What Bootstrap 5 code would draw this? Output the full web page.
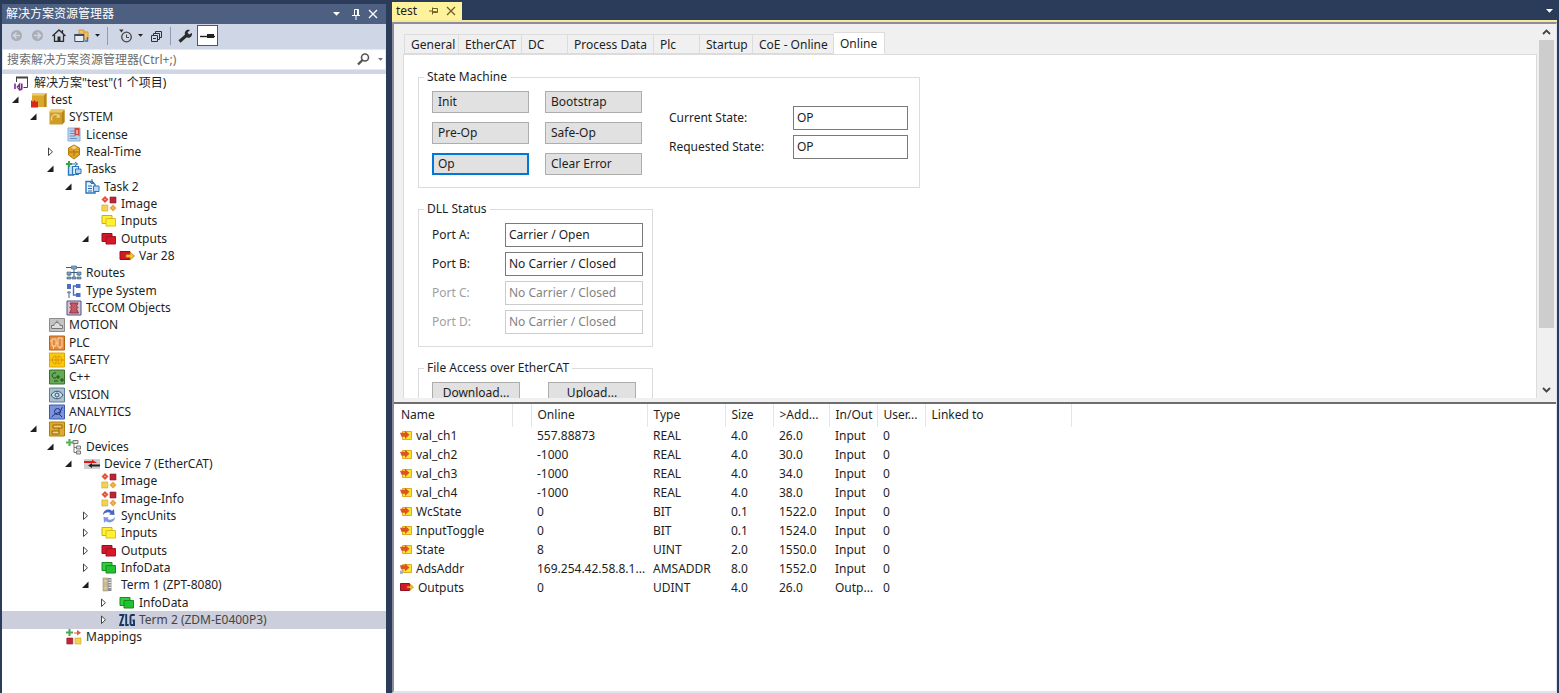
<!DOCTYPE html>
<html lang="zh-CN">
<head>
<meta charset="utf-8">
<meta name="viewport" content="width=device-width, initial-scale=1">
<title>test</title>
<link href="https://cdn.jsdelivr.net/npm/bootstrap@5.3.0/dist/css/bootstrap.min.css" rel="stylesheet">
<style>
  body { background: #2b3c5a; font-family: "Noto Sans", "Noto Sans CJK SC", sans-serif; font-size: 12px; line-height: 16px; color: #1e1e1e; }
  svg { display: block; flex: none; }
  button { color: inherit; }
  .sprite { position: absolute; width: 0; height: 0; }

  /* solution explorer */
  .explorer { width: 384px; margin-left: 2px; background: #cfd6e5; flex: none; }
  .explorer-title { height: 20px; background: #4d6082; color: #fff; padding: 0 8px 0 4px; }
  .explorer-tools { height: 25px; padding: 0 8px 2px; }
  .tool { border: 0; background: none; padding: 0; height: 21px; }
  .tool-drop { display: flex; align-items: center; gap: 6px; }
  .tool-on { border: 1px solid #4a5672; background: #fff; width: 21px; }
  .tool-sep { width: 1px; height: 18px; background: #8e9bb5; margin: 0 7px; }
  .search { height: 21px; background: #fff; border: 1px solid #e3e8f1; padding: 0 2px 0 4px; }
  .search input { border: 0; outline: 0; padding: 0; background: none; color: #1e1e1e; min-width: 0; }
  .search input::placeholder { color: #6d6d6d; opacity: 1; }
  .tree { background: #fff; margin: 4px 0 0; padding: 0 0 47px; list-style: none; display: grid; grid-auto-rows: 1fr; min-height: 0; }
  .tree li { display: flex; align-items: center; gap: 4px; white-space: nowrap; min-height: 0; }
  .tree .twist { width: 17px; height: 16px; border: 0; padding: 0; background: none; flex: none; }
  .lv0 { padding-left: 12px; } .lv1 { padding-left: 8px; } .lv2 { padding-left: 26px; }
  .lv3 { padding-left: 43px; } .lv4 { padding-left: 61px; } .lv5 { padding-left: 78px; } .lv6 { padding-left: 96px; }
  .tree .picked { background: #cccedb; color: #444; }

  /* document area */
  .doc { margin: 2px 2px 0 6px; min-width: 0; }
  .doc-strip { height: 18px; border: 0; }
  .doc-tab { background: #fff29d; width: 70px; padding: 0 6px 0 4px; }
  .doc-body { border: solid #8e8b9a; border-width: 2px 1px 2px 2px; border-bottom-color: #dfe5f0; border-right-color: #dfe5f0; min-height: 0; background: #f0f0f0; }
  .doc-line { height: 2px; background: #f5e99c; }
  .pane-top { flex: 56 1 0; min-height: 0; padding-left: 9px; }
  .pane-split { height: 6px; border-bottom: 2px solid #6d6d6d; flex: none; }
  .pane-grid { flex: 43 1 0; min-height: 0; background: #fff; overflow: hidden; }
  .page-tabs { padding: 8px 0 0 1px; border: 0; flex-wrap: nowrap; }
  .page-tabs .nav-link { border: 1px solid #dcdcdc; border-left-width: 0; border-radius: 0; background: #f0f0f0; color: #1e1e1e; height: 20px; padding: 1px 0 0 6px; margin: 2px 0 0; white-space: nowrap; text-align: left; }
  .page-tabs li:first-child .nav-link { border-left-width: 1px; }
  .page-tabs .nav-link.active { background: #fff; color: #1e1e1e; height: 22px; margin: 0; border-color: #dcdcdc; border-bottom-color: #fff; }
  .w46 { width: 46px; } .w51 { width: 51px; } .w53 { width: 53px; } .w55 { width: 55px; } .w63 { width: 63px; } .w81 { width: 81px; } .w86 { width: 86px; }
  .page-sheet { background: #fff; border: 1px solid #dcdcdc; border-bottom: 0; padding: 13px 14px 0; overflow: hidden; min-height: 0; margin-right: 2px; }
  .box { border: 1px solid #dcdcdc; padding: 5px 11px 12px 13px; margin: 0 0 12px; }
  .box legend { float: none; width: auto; font-size: 12px; line-height: 18px; margin: 0 0 0 -8px; padding: 0 3px; }
  .box-wide { width: 502px; } .box-slim { width: 235px; }
  .push { border: 1px solid #adadad; background: #e1e1e1; border-radius: 0; height: 22px; padding: 0 5px; font-size: 12px; line-height: 18px; text-align: left; color: #1e1e1e; }
  .push-focus { border: 2px solid #0078d7; padding: 0 4px; line-height: 16px; }
  .push-grid { display: grid; grid-template-columns: 97px 97px; gap: 9px 16px; }
  .file-grid { display: grid; grid-template-columns: 88px 88px; gap: 28px; }
  .field { border: 1px solid #7a7a7a; border-radius: 0; background: #fff; height: 24px; padding: 0 3px 2px; font-size: 12px; color: #1e1e1e; min-width: 0; }
  .field:disabled { border-color: #ccc; color: #838383; background: #fff; }
  .state-grid { display: grid; grid-template-columns: 124px 115px; gap: 5px 0; align-items: center; margin-top: 15px; }
  .port-grid { display: grid; grid-template-columns: 73px 138px; gap: 5px 0; align-items: center; }
  .dim { color: #a0a0a0; }
  .scroll { width: 15px; background: #f0f0f0; margin-right: 2px; }
  .scroll button { border: 0; background: none; height: 16px; padding: 0; }
  .thumb { background: #cdcdcd; flex: 0 0 288px; }

  .vars { table-layout: fixed; width: 677px; border-collapse: collapse; margin: 0; }
  .vars th { font-weight: 400; height: 23px; border-right: 1px solid #e5e5e5; padding: 0 0 0 6px; }
  .vars th:first-child { padding-left: 7px; }
  .vars td { height: 19px; padding: 0 0 0 6px; white-space: nowrap; }
  .vars td svg { display: inline-block; vertical-align: -1px; margin-right: 4px; }
</style>
</head>
<body class="vh-100 overflow-hidden">

<svg class="sprite" aria-hidden="true">
  <symbol id="open" viewBox="0 0 17 16"><path d="M8.500 4.500v6.500H2z" fill="#1e1e1e"/></symbol>
  <symbol id="shut" viewBox="0 0 17 16"><path d="M3.500 4v7.500l4-3.700z" fill="#fff" stroke="#444"/></symbol>
  <symbol id="sln" viewBox="0 0 16 16"><path d="M2.500 7V2.500h11v10H9.500" fill="#fff" stroke="#424242"/><path d="M2 2.500h12" stroke="#424242" stroke-width="2"/><path d="M1 8.500v5.500M3 12.500l2.500-3v5l-2.500-3M7.800 8.500v6M5.500 14.500l2.300 0" fill="none" stroke="#7b2d90" stroke-width="1.600"/></symbol>
  <symbol id="proj" viewBox="0 0 16 16"><path d="M1 1h14.500v14H1z" fill="#d9a72c"/><path d="M1 1h14.500L13 3.500H1z" fill="#f0cd6c"/><path d="M13 3.500L15.500 1v14H13z" fill="#b98718"/><path d="M0 8l2 2 1.500-2 1.500 2 2-1v6.500H0z" fill="#d8281e"/></symbol>
  <symbol id="sys" viewBox="0 0 16 16"><path d="M2 .5h13.500V13L13 15.500H.5V3z" fill="#cf9c25"/><path d="M2 .5h13.500L13 3.500H.5z" fill="#edc766"/><path d="M13 3.500L15.500 1v12L13 15.500z" fill="#b58419"/><path d="M3 11.500a4 4 0 0 1 7-4M10 5.500v2.500H7.500" fill="none" stroke="#f1d68a" stroke-width="1.300"/></symbol>
  <symbol id="lic" viewBox="0 0 16 16"><path d="M2 1h12v13H2z" fill="#b6d0ec" stroke="#8fb0d5"/><path d="M4 4h5M4 6.500h5M4 9h5M4 11.500h7" stroke="#6e93c4"/><path d="M8.500 1h5v8L11 8 8.500 9z" fill="#d34a3a"/><path d="M11 3v4" stroke="#fff" stroke-width="1"/></symbol>
  <symbol id="rt" viewBox="0 0 16 16"><path d="M8 1l5.500 3v7L8 15l-5.500-4V4z" fill="#dfa323" stroke="#b27c12"/><path d="M3 8h10M8 4v8" stroke="#a87414"/><path d="M5 3.500l3-2 3 2-3 2z" fill="#f6d27a"/></symbol>
  <symbol id="tasks" viewBox="0 0 16 16"><path d="M2.500 4v10h5V6" fill="#cfe3f6" stroke="#2a78bd" stroke-width="1.400"/><path d="M6.500 5.500h6v8h-6z" fill="#dcebf8" stroke="#2a78bd" stroke-width="1.200"/><path d="M9.500 8h5.500v4.500H9.500z" fill="#b9d7f3" stroke="#2a78bd"/><path d="M6 3h5.500M9 1l2.500 2L9 5" fill="none" stroke="#2a78bd"/><path d="M3 0v6M0 3h6" stroke="#35a247" stroke-width="2"/></symbol>
  <symbol id="task" viewBox="0 0 16 16"><path d="M2 2.500h6l3 3V14H2z" fill="#e8f2fb" stroke="#2a78bd" stroke-width="1.400"/><path d="M9.500 7h5.500v5.500H9.500z" fill="#b9d7f3" stroke="#2a78bd"/><path d="M4 7h4M4 9.500h4M4 12h4M8 0v4M6 3l2 2 2-2" fill="none" stroke="#2a6bae"/></symbol>
  <symbol id="img" viewBox="0 0 16 16"><path d="M4 0l3.500 3.500L4 7 .5 3.500z" fill="#e2523f"/><path d="M9 1h6v6H9z" fill="#b9263a" stroke="#8f1a2a" stroke-width=".6"/><path d="M.8 9h6v6h-6z" fill="#f2d254" stroke="#c9a32e" stroke-width=".6"/><path d="M12 8.500l3.500 3.500-3.500 3.500L8.500 12z" fill="#e7a53a"/><path d="M3.500 3.500h1M11.500 12h1" stroke="#fbe7c8"/></symbol>
  <symbol id="yel" viewBox="0 0 16 16"><path d="M1 2.500h10v8H1z" fill="#fff12e" stroke="#c9ae18"/><path d="M5 5.500h9.500V13H5z" fill="#fff12e" stroke="#d8bf20"/></symbol>
  <symbol id="red" viewBox="0 0 16 16"><path d="M1 2.500h10v8H1z" fill="#d81628" stroke="#8c1420"/><path d="M5 5.500h9.500V13H5z" fill="#d81628" stroke="#a01522"/></symbol>
  <symbol id="grn" viewBox="0 0 16 16"><path d="M1 2.500h10v8H1z" fill="#2fd03c" stroke="#178a22"/><path d="M5 5.500h9.500V13H5z" fill="#22c12f" stroke="#178a22"/></symbol>
  <symbol id="var" viewBox="0 0 16 16"><path d="M1 3.500h10v8H1z" fill="#d81628" stroke="#8c1420"/><path d="M7 6.500h4V4l4.500 4-4.500 4V9.500H7z" fill="#f5c22d" stroke="#a9701a" stroke-width=".7"/></symbol>
  <symbol id="routes" viewBox="0 0 16 16"><path d="M0 2.500h5M11 2.500h5M8 4v8M3 11V7.500h10V11" fill="none" stroke="#3b5a78"/><path d="M5.500 1h5v3h-5zM1 7h4v3H1zM11 7h4v3h-4zM1 12h4v2H1zM6 12h4v2H6zM11 12h4v2h-4z" fill="#7fa3bd" stroke="#3b5a78" stroke-width=".6"/></symbol>
  <symbol id="type" viewBox="0 0 16 16"><path d="M1 1h4v5H1zM10 1h4.500v4H10zM10 10h4.500v4H10z" fill="#4a6fc0"/><path d="M10 3H7.500v9H10" fill="none" stroke="#4a6fc0" stroke-width="1.400"/><path d="M3 8v3M1 9.500h4M3 11v4" stroke="#7c8aa5" stroke-width="1.400"/></symbol>
  <symbol id="tccom" viewBox="0 0 16 16"><path d="M1 1h14v14H1z" fill="#d9c4cc" stroke="#49508a"/><path d="M4 3h8l-1.500 3 1.500 1.500-1.500 1.500 2 4h-9l2-4L4 7.500 5.500 6z" fill="#c75565" stroke="#8d3445"/></symbol>
  <symbol id="motion" viewBox="0 0 16 16"><path d="M.5 1.500h15v13H.5z" fill="#c3c3c3" stroke="#8c8c8c"/><path d="M2.500 11.500v-3h2.500c0-4 6-4 6 0h2.500v3zM8 3.500v2" fill="#dedede" stroke="#777"/></symbol>
  <symbol id="plc" viewBox="0 0 16 16"><path d="M.5 1h15v14H.5z" fill="#e5893a" stroke="#b8611c"/><path d="M3 4h4v7H3zM9 3h4v9H9zM1 6h2M7 8h2M4.500 11v3M11 12v2" fill="none" stroke="#fbd9b5"/></symbol>
  <symbol id="safety" viewBox="0 0 16 16"><path d="M.5 1h15v14H.5z" fill="#fcc80b" stroke="#dba60c"/><path d="M7 4C2 4 2 12 7 12V4zM9 4c5 0 5 8 0 8V4zM1 8h14" fill="none" stroke="#d9950a"/></symbol>
  <symbol id="cpp" viewBox="0 0 16 16"><path d="M.5 1h15v14H.5z" fill="#67a955" stroke="#39712d"/><path d="M7 4C2 3 2 10 7 9M7 8h4M9 6v4M11 11h4M13 9v4M5 12h4" fill="none" stroke="#1f4c1a"/></symbol>
  <symbol id="vision" viewBox="0 0 16 16"><path d="M.5 1h15v14H.5z" fill="#a8c0cf" stroke="#5e7f95"/><path d="M2 8c3-5 9-5 12 0-3 5-9 5-12 0z" fill="#c9dbe5" stroke="#34546a"/><circle cx="8" cy="8" r="2" fill="none" stroke="#34546a"/></symbol>
  <symbol id="ana" viewBox="0 0 16 16"><path d="M.5 1h15v14H.5z" fill="#7b93dd" stroke="#4159a8"/><path d="M2.500 13l3.500-3 5-2 2.500-5M10 10l3 3" fill="none" stroke="#1f3276"/><circle cx="8.500" cy="7.500" r="3" fill="none" stroke="#1f3276"/></symbol>
  <symbol id="io" viewBox="0 0 16 16"><path d="M.5 1h15v14H.5z" fill="#e0a92f" stroke="#ad7d17"/><path d="M4 4h9v3H4zM10 7v2.500M3 10h7v3H3z" fill="#f3d079" stroke="#8f6410"/></symbol>
  <symbol id="devs" viewBox="0 0 16 16"><path d="M3.500 0v7M0 3.500h7" stroke="#4db35c" stroke-width="2.200"/><path d="M7 1.500h5v3H7zM10.500 7h4v3h-4zM10.500 12h4v3h-4z" fill="#ddd" stroke="#777"/><path d="M8 5v8.500h2.500M8 8.500h2.500" fill="none" stroke="#777"/></symbol>
  <symbol id="dev" viewBox="0 0 16 16"><path d="M0 3h16v10H0z" fill="#cfcfcf"/><path d="M0 5h8V3.500L13 7H0z" fill="#e01b1b"/><path d="M16 8.500H8V7L4 9.500 8 12v-1.500h8z" fill="#222"/></symbol>
  <symbol id="sync" viewBox="0 0 16 16"><path d="M2 7c0-5 6-7 9-4l2-2 .5 6L8 6.500 9.500 5C7 3.500 4 4.500 2 7z" fill="#4a66c4"/><path d="M14 9c0 5-6 7-9 4l-2 2-.5-6 5.500.5L6.500 11c2.500 1.500 5.500.5 7.500-2z" fill="#7f97dc"/></symbol>
  <symbol id="term" viewBox="0 0 16 16"><path d="M2 1h5v13H2z" fill="#c9b98b" stroke="#a3966f" stroke-width=".6"/><path d="M7 1h3.500v13H7z" fill="#8d8d97"/><path d="M7.500 3h3M7.500 5.500h3M7.500 8h3M7.500 10.500h3M3.500 4h2M3.500 11h2" stroke="#ece9e0"/></symbol>
  <symbol id="zlg" viewBox="0 0 16 16"><path d="M.3 3H4.500L1.200 13H5.200M7.200 2v11h2.500M15.800 3h-3.500l-.8 1v8l.8 1H15V8.500h-1.500" fill="none" stroke="#123a63" stroke-width="1.900"/></symbol>
  <symbol id="map" viewBox="0 0 16 16"><path d="M3.500 0v7M0 3.500h7" stroke="#4aa650" stroke-width="2"/><path d="M8 3.500h3V1l4 2.700-4 2.700V4.500H8z" fill="#dd5a45"/><path d="M.8 9h6v6h-6z" fill="#c42436" stroke="#8f1a2a" stroke-width=".6"/><path d="M9 9h6v6H9z" fill="#f4d44c" stroke="#c9a32e" stroke-width=".6"/></symbol>
  <symbol id="in" viewBox="0 0 12 11"><path d="M2.500 1.500h9v8h-9z" fill="#ffe52e" stroke="#e0a824"/><path d="M0 2.800h5V.8L9.500 4.800 5 9V6.800H1.500z" fill="#df5228"/></symbol>
  <symbol id="ads" viewBox="0 0 12 11"><path d="M2.500 1.500h9v8h-9z" fill="#ffe52e" stroke="#e0a824"/><path d="M0 2.300h5V.5L9.500 4.500 5 8.500V6.300H1z" fill="#df5228"/><path d="M0 7.500h4L2.500 11H0z" fill="#a9b3bd"/></symbol>
  <symbol id="out" viewBox="0 0 14 11"><path d="M.5 1.500h9v7h-9z" fill="#d81628" stroke="#8c1420"/><path d="M7 4.200h3V2l3.500 3L10 8.500V6H7z" fill="#f5c22d" stroke="#a9701a" stroke-width=".6"/></symbol>
  <symbol id="caret" viewBox="0 0 7 4"><path d="M0 0h7L3.500 3.800z" fill="currentColor"/></symbol>
  <symbol id="cross" viewBox="0 0 10 10"><path d="M1 1l8 8M9 1L1 9" stroke="currentColor" stroke-width="1.300"/></symbol>
</svg>

<div class="d-flex h-100">
  <aside class="explorer d-flex flex-column mt-1">
    <header class="explorer-title d-flex align-items-center">
      <span class="me-auto">解决方案资源管理器</span>
      <button class="tool me-2 text-white" aria-label="窗口位置"><svg width="7" height="4"><use href="#caret"/></svg></button>
      <button class="tool me-2 ms-1 text-white" aria-label="自动隐藏"><svg width="8" height="11" viewBox="0 0 8 11" fill="none" stroke="currentColor"><path d="M2.500 6V.5h4V6M0 6.500h8M4 7v4M5.500 1v5"/></svg></button>
      <button class="tool text-white" aria-label="关闭"><svg width="10" height="10"><use href="#cross"/></svg></button>
    </header>
    <div class="explorer-tools d-flex align-items-center">
      <button class="tool me-2" aria-label="后退" disabled><svg width="13" height="13" viewBox="0 0 13 13"><circle cx="6.500" cy="6.500" r="5.500" fill="#a9adb6"/><path d="M10 6.500H4M6.500 3.500l-3 3 3 3" stroke="#cfd6e5" stroke-width="1.600" fill="none"/></svg></button>
      <button class="tool me-2" aria-label="前进" disabled><svg width="13" height="13" viewBox="0 0 13 13"><circle cx="6.500" cy="6.500" r="5.500" fill="#a9adb6"/><path d="M3 6.500h6M6.500 3.500l3 3-3 3" stroke="#cfd6e5" stroke-width="1.600" fill="none"/></svg></button>
      <button class="tool me-2" aria-label="主页"><svg width="14" height="13" viewBox="0 0 14 13"><path d="M.5 7L7 1l6.500 6M2.500 6v6.500h9V6M10.500 1v3" fill="none" stroke="#2b2b2b" stroke-width="1.300"/><path d="M5.500 7.500h3v5h-3z" fill="#2b2b2b"/></svg></button>
      <button class="tool tool-drop" aria-label="切换视图"><svg width="15" height="14" viewBox="0 0 15 14"><path d="M5 1h5v4H5zM10 3h4v7h-4" fill="#f3c165" stroke="#d99a2b"/><path d="M.8 5.500h9v7h-9z" fill="#e8ecf4" stroke="#3a4a66"/><path d="M.5 6h9.600" stroke="#3a4a66" stroke-width="2"/><path d="M13.500 8v4h-3" stroke="#2d79c7" fill="none" stroke-width="1.400"/></svg><svg width="5" height="3"><use href="#caret"/></svg></button>
      <span class="tool-sep"></span>
      <button class="tool tool-drop ms-1" aria-label="筛选"><svg width="13" height="14" viewBox="0 0 13 14"><path d="M0 .5h4.500L2.500 3.500z" fill="#333"/><circle cx="7.500" cy="8" r="4.800" fill="none" stroke="#444" stroke-width="1.300"/><path d="M7.500 5.500V8.500h2.500" fill="none" stroke="#444"/></svg><svg width="5" height="3"><use href="#caret"/></svg></button>
      <button class="tool ms-2" aria-label="全部折叠"><svg width="12" height="12" viewBox="0 0 12 12" fill="none" stroke="#333"><path d="M.5 5.500h6v6h-6zM2.500 5V3.500h6v6H7M4.500 3V1.500h6v6H9M2 8.500h3"/></svg></button>
      <span class="tool-sep"></span>
      <button class="tool me-1" aria-label="属性"><svg width="15" height="14" viewBox="0 0 15 14"><path d="M1.500 12.500L9 6" stroke="#2b2b2b" stroke-width="3"/><path d="M7 6c-1-4 2-6 5-5L9.500 3.500l1.500 2 3-1.500c.5 4-3 6-6 4z" fill="#2b2b2b"/></svg></button>
      <button class="tool tool-on" aria-label="预览选定项" aria-pressed="true"><svg class="mx-auto" width="15" height="6" viewBox="0 0 15 6"><path d="M0 3.500h15" stroke="#222" stroke-width="1.400"/><path d="M7 1h7v4H7z" fill="#222"/></svg></button>
    </div>
    <div class="search d-flex align-items-center gap-1">
      <input class="flex-grow-1" type="text" aria-label="搜索" placeholder="搜索解决方案资源管理器(Ctrl+;)">
      <svg width="13" height="13" viewBox="0 0 13 13" fill="none" stroke="#555"><circle cx="8" cy="4.500" r="3.500" stroke-width="1.600"/><path d="M5.500 7L1 11.500" stroke-width="2.400"/></svg>
      <svg class="text-secondary ms-1" width="5" height="3"><use href="#caret"/></svg>
    </div>
    <ul class="tree flex-grow-1">
      <li class="lv0"><svg width="16" height="16"><use href="#sln"/></svg>解决方案"test"(1 个项目)</li>
      <li class="lv1"><button class="twist" aria-label="折叠"><svg width="17" height="16"><use href="#open"/></svg></button><svg width="16" height="16"><use href="#proj"/></svg>test</li>
      <li class="lv2"><button class="twist" aria-label="折叠"><svg width="17" height="16"><use href="#open"/></svg></button><svg width="16" height="16"><use href="#sys"/></svg>SYSTEM</li>
      <li class="lv3"><span class="twist"></span><svg width="16" height="16"><use href="#lic"/></svg>License</li>
      <li class="lv3"><button class="twist" aria-label="展开"><svg width="17" height="16"><use href="#shut"/></svg></button><svg width="16" height="16"><use href="#rt"/></svg>Real-Time</li>
      <li class="lv3"><button class="twist" aria-label="折叠"><svg width="17" height="16"><use href="#open"/></svg></button><svg width="16" height="16"><use href="#tasks"/></svg>Tasks</li>
      <li class="lv4"><button class="twist" aria-label="折叠"><svg width="17" height="16"><use href="#open"/></svg></button><svg width="16" height="16"><use href="#task"/></svg>Task 2</li>
      <li class="lv5"><span class="twist"></span><svg width="16" height="16"><use href="#img"/></svg>Image</li>
      <li class="lv5"><span class="twist"></span><svg width="16" height="16"><use href="#yel"/></svg>Inputs</li>
      <li class="lv5"><button class="twist" aria-label="折叠"><svg width="17" height="16"><use href="#open"/></svg></button><svg width="16" height="16"><use href="#red"/></svg>Outputs</li>
      <li class="lv6"><span class="twist"></span><svg width="16" height="16"><use href="#var"/></svg>Var 28</li>
      <li class="lv3"><span class="twist"></span><svg width="16" height="16"><use href="#routes"/></svg>Routes</li>
      <li class="lv3"><span class="twist"></span><svg width="16" height="16"><use href="#type"/></svg>Type System</li>
      <li class="lv3"><span class="twist"></span><svg width="16" height="16"><use href="#tccom"/></svg>TcCOM Objects</li>
      <li class="lv2"><span class="twist"></span><svg width="16" height="16"><use href="#motion"/></svg>MOTION</li>
      <li class="lv2"><span class="twist"></span><svg width="16" height="16"><use href="#plc"/></svg>PLC</li>
      <li class="lv2"><span class="twist"></span><svg width="16" height="16"><use href="#safety"/></svg>SAFETY</li>
      <li class="lv2"><span class="twist"></span><svg width="16" height="16"><use href="#cpp"/></svg>C++</li>
      <li class="lv2"><span class="twist"></span><svg width="16" height="16"><use href="#vision"/></svg>VISION</li>
      <li class="lv2"><span class="twist"></span><svg width="16" height="16"><use href="#ana"/></svg>ANALYTICS</li>
      <li class="lv2"><button class="twist" aria-label="折叠"><svg width="17" height="16"><use href="#open"/></svg></button><svg width="16" height="16"><use href="#io"/></svg>I/O</li>
      <li class="lv3"><button class="twist" aria-label="折叠"><svg width="17" height="16"><use href="#open"/></svg></button><svg width="16" height="16"><use href="#devs"/></svg>Devices</li>
      <li class="lv4"><button class="twist" aria-label="折叠"><svg width="17" height="16"><use href="#open"/></svg></button><svg width="16" height="16"><use href="#dev"/></svg>Device 7 (EtherCAT)</li>
      <li class="lv5"><span class="twist"></span><svg width="16" height="16"><use href="#img"/></svg>Image</li>
      <li class="lv5"><span class="twist"></span><svg width="16" height="16"><use href="#img"/></svg>Image-Info</li>
      <li class="lv5"><button class="twist" aria-label="展开"><svg width="17" height="16"><use href="#shut"/></svg></button><svg width="16" height="16"><use href="#sync"/></svg>SyncUnits</li>
      <li class="lv5"><button class="twist" aria-label="展开"><svg width="17" height="16"><use href="#shut"/></svg></button><svg width="16" height="16"><use href="#yel"/></svg>Inputs</li>
      <li class="lv5"><button class="twist" aria-label="展开"><svg width="17" height="16"><use href="#shut"/></svg></button><svg width="16" height="16"><use href="#red"/></svg>Outputs</li>
      <li class="lv5"><button class="twist" aria-label="展开"><svg width="17" height="16"><use href="#shut"/></svg></button><svg width="16" height="16"><use href="#grn"/></svg>InfoData</li>
      <li class="lv5"><button class="twist" aria-label="折叠"><svg width="17" height="16"><use href="#open"/></svg></button><svg width="16" height="16"><use href="#term"/></svg>Term 1 (ZPT-8080)</li>
      <li class="lv6"><button class="twist" aria-label="展开"><svg width="17" height="16"><use href="#shut"/></svg></button><svg width="16" height="16"><use href="#grn"/></svg>InfoData</li>
      <li class="lv6 picked"><button class="twist" aria-label="展开"><svg width="17" height="16"><use href="#shut"/></svg></button><svg width="16" height="16"><use href="#zlg"/></svg>Term 2 (ZDM-E0400P3)</li>
      <li class="lv3"><span class="twist"></span><svg width="16" height="16"><use href="#map"/></svg>Mappings</li>
    </ul>
  </aside>

  <main class="doc d-flex flex-column flex-grow-1">
    <div class="doc-strip d-flex align-items-center justify-content-between pe-1">
      <div class="doc-tab d-flex align-items-center h-100"><span class="me-auto">test</span>
        <button class="tool me-2" aria-label="固定"><svg width="9" height="8" viewBox="0 0 9 8" fill="none" stroke="#6d6125"><path d="M0 4h3M3.500 0.500v7M3.500 1.500h5v4h-5M4 4.700h4.500"/></svg></button>
        <button class="tool" aria-label="关闭"><svg width="10" height="10" color="#6d6125"><use href="#cross"/></svg></button>
      </div>
      <button class="tool text-white" aria-label="文档列表"><svg width="7" height="4"><use href="#caret"/></svg></button>
    </div>
    <div class="doc-line"></div>
    <div class="doc-body d-flex flex-column flex-grow-1">
      <div class="pane-top d-flex">
        <div class="d-flex flex-column flex-grow-1">
          <ul class="nav nav-tabs page-tabs">
            <li><button class="nav-link w55">General</button></li>
            <li><button class="nav-link w63">EtherCAT</button></li>
            <li><button class="nav-link w46">DC</button></li>
            <li><button class="nav-link w86">Process Data</button></li>
            <li><button class="nav-link w46">Plc</button></li>
            <li><button class="nav-link w53">Startup</button></li>
            <li><button class="nav-link w81">CoE - Online</button></li>
            <li><button class="nav-link w51 active">Online</button></li>
          </ul>
          <div class="page-sheet flex-grow-1">
            <fieldset class="box box-wide">
              <legend>State Machine</legend>
              <div class="d-flex align-items-start justify-content-between">
                <div class="push-grid">
                  <button class="push">Init</button><button class="push">Bootstrap</button>
                  <button class="push">Pre-Op</button><button class="push">Safe-Op</button>
                  <button class="push push-focus">Op</button><button class="push">Clear Error</button>
                </div>
                <div class="state-grid">
                  <label for="cur">Current State:</label><input class="field" id="cur" value="OP" readonly>
                  <label for="req">Requested State:</label><input class="field" id="req" value="OP" readonly>
                </div>
              </div>
            </fieldset>
            <fieldset class="box box-slim">
              <legend>DLL Status</legend>
              <div class="port-grid">
                <label for="pa">Port A:</label><input class="field" id="pa" value="Carrier / Open" readonly>
                <label for="pb">Port B:</label><input class="field" id="pb" value="No Carrier / Closed" readonly>
                <label class="dim" for="pc">Port C:</label><input class="field" id="pc" value="No Carrier / Closed" disabled>
                <label class="dim" for="pd">Port D:</label><input class="field" id="pd" value="No Carrier / Closed" disabled>
              </div>
            </fieldset>
            <fieldset class="box box-slim">
              <legend>File Access over EtherCAT</legend>
              <div class="file-grid"><button class="push text-center">Download...</button><button class="push text-center">Upload...</button></div>
            </fieldset>
          </div>
        </div>
        <div class="scroll d-flex flex-column">
          <button aria-label="向上滚动"><svg class="mx-auto" width="9" height="6" viewBox="0 0 9 6"><path d="M1 5l3.500-3.500L8 5" fill="none" stroke="#444" stroke-width="1.800"/></svg></button>
          <div class="thumb"></div>
          <button class="mt-auto" aria-label="向下滚动"><svg class="mx-auto" width="9" height="6" viewBox="0 0 9 6"><path d="M1 1l3.500 3.500L8 1" fill="none" stroke="#444" stroke-width="1.800"/></svg></button>
        </div>
      </div>
      <div class="pane-split"></div>
      <div class="pane-grid">
        <table class="vars">
          <colgroup><col width="118"><col width="19"><col width="116"><col width="78"><col width="48"><col width="56"><col width="48"><col width="48"><col width="146"></colgroup>
          <thead><tr><th>Name</th><th></th><th>Online</th><th>Type</th><th>Size</th><th>&gt;Add...</th><th>In/Out</th><th>User...</th><th>Linked to</th></tr></thead>
          <tbody>
            <tr><td><svg width="12" height="11"><use href="#in"/></svg>val_ch1</td><td></td><td>557.88873</td><td>REAL</td><td>4.0</td><td>26.0</td><td>Input</td><td>0</td><td></td></tr>
            <tr><td><svg width="12" height="11"><use href="#in"/></svg>val_ch2</td><td></td><td>-1000</td><td>REAL</td><td>4.0</td><td>30.0</td><td>Input</td><td>0</td><td></td></tr>
            <tr><td><svg width="12" height="11"><use href="#in"/></svg>val_ch3</td><td></td><td>-1000</td><td>REAL</td><td>4.0</td><td>34.0</td><td>Input</td><td>0</td><td></td></tr>
            <tr><td><svg width="12" height="11"><use href="#in"/></svg>val_ch4</td><td></td><td>-1000</td><td>REAL</td><td>4.0</td><td>38.0</td><td>Input</td><td>0</td><td></td></tr>
            <tr><td><svg width="12" height="11"><use href="#in"/></svg>WcState</td><td></td><td>0</td><td>BIT</td><td>0.1</td><td>1522.0</td><td>Input</td><td>0</td><td></td></tr>
            <tr><td><svg width="12" height="11"><use href="#in"/></svg>InputToggle</td><td></td><td>0</td><td>BIT</td><td>0.1</td><td>1524.0</td><td>Input</td><td>0</td><td></td></tr>
            <tr><td><svg width="12" height="11"><use href="#in"/></svg>State</td><td></td><td>8</td><td>UINT</td><td>2.0</td><td>1550.0</td><td>Input</td><td>0</td><td></td></tr>
            <tr><td><svg width="12" height="11"><use href="#ads"/></svg>AdsAddr</td><td></td><td>169.254.42.58.8.1...</td><td>AMSADDR</td><td>8.0</td><td>1552.0</td><td>Input</td><td>0</td><td></td></tr>
            <tr><td><svg width="14" height="11"><use href="#out"/></svg>Outputs</td><td></td><td>0</td><td>UDINT</td><td>4.0</td><td>26.0</td><td>Outp...</td><td>0</td><td></td></tr>
          </tbody>
        </table>
      </div>
    </div>
  </main>
</div>
<script src="https://cdn.jsdelivr.net/npm/bootstrap@5.3.0/dist/js/bootstrap.bundle.min.js"></script>
</body>
</html>
